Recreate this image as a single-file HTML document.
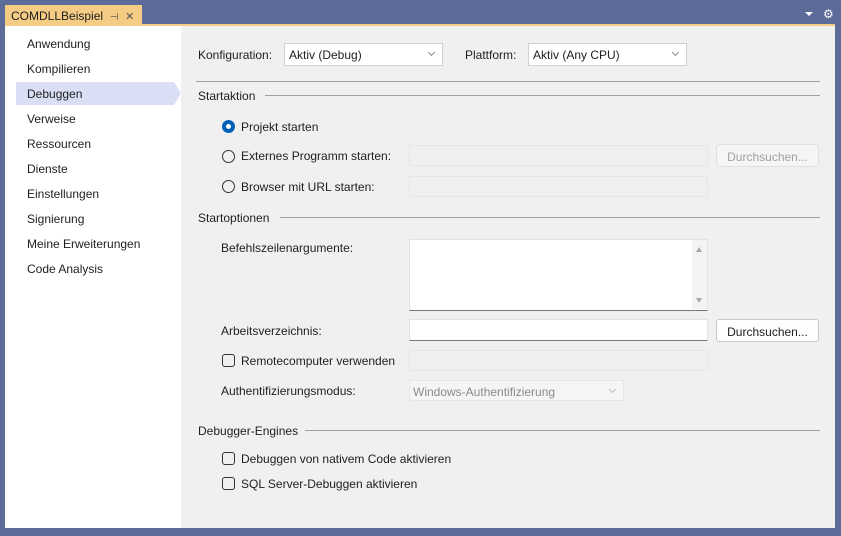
<!DOCTYPE html>
<html><head><meta charset="utf-8"><style>
*{box-sizing:border-box;margin:0;padding:0}
body{width:841px;height:536px;background:#5d6b99;position:relative;overflow:hidden;font-family:"Liberation Sans",sans-serif;font-size:12px;color:#1e1e1e}
.a{position:absolute;white-space:nowrap}
.tab{left:5px;top:5px;width:137px;height:20px;background:#f5cc84;padding:4px 0 0 6px;font-size:12px}
.bar{left:5px;top:24px;width:830px;height:2px;background:#f5cc84}
.left{left:5px;top:26px;width:176px;height:502px;background:#fff}
.right{left:181px;top:26px;width:654px;height:502px;background:#f0f0f0}
.nav{left:27px}
.sel{left:16px;top:82px;width:158px;height:23px;background:#dadff5}
.box{background:#fff;border:1px solid #d0d0d0}
.dis{background:#f0f0f0;border:1px solid #e6e6e6}
.line{height:1px;background:#a0a0a0}
.rad{width:13px;height:13px;border:1px solid #333;border-radius:50%}
.chk{width:13px;height:13px;border:1px solid #333;border-radius:3px}
.btn{border:1px solid #c8c8c8;border-radius:3px;background:#fdfdfd;text-align:center;padding-top:5px}
.chev{position:absolute;right:8px;top:6px;width:5px;height:5px;border-right:1px solid #888;border-bottom:1px solid #888;transform:rotate(45deg)}
</style></head><body>
<div class="a tab">COMDLLBeispiel&nbsp;&nbsp;<span style="font-size:10px;color:#555">⊣</span>&nbsp;&nbsp;<span style="color:#555;font-size:11px">✕</span></div>
<div class="a" style="left:805px;top:12px;width:0;height:0;border-left:4px solid transparent;border-right:4px solid transparent;border-top:4px solid #fff"></div>
<div class="a" style="left:823px;top:7px;color:#fff;font-size:12px">⚙</div>
<div class="a bar"></div>
<div class="a left"></div>
<div class="a right"></div>
<div class="a sel"></div>
<div class="a" style="left:174px;top:82px;width:0;height:0;border-top:11px solid transparent;border-bottom:12px solid transparent;border-left:7px solid #dadff5"></div>
<div class="a nav" style="top:37px">Anwendung</div>
<div class="a nav" style="top:62px">Kompilieren</div>
<div class="a nav" style="top:87px">Debuggen</div>
<div class="a nav" style="top:112px">Verweise</div>
<div class="a nav" style="top:137px">Ressourcen</div>
<div class="a nav" style="top:162px">Dienste</div>
<div class="a nav" style="top:187px">Einstellungen</div>
<div class="a nav" style="top:212px">Signierung</div>
<div class="a nav" style="top:237px">Meine Erweiterungen</div>
<div class="a nav" style="top:262px">Code Analysis</div>

<div class="a" style="left:198px;top:48px">Konfiguration:</div>
<div class="a box" style="left:284px;top:43px;width:159px;height:23px;padding:4px 0 0 4px">Aktiv (Debug)<div class="chev"></div></div>
<div class="a" style="left:465px;top:48px">Plattform:</div>
<div class="a box" style="left:528px;top:43px;width:159px;height:23px;padding:4px 0 0 4px">Aktiv (Any CPU)<div class="chev"></div></div>
<div class="a line" style="left:196px;top:81px;width:624px"></div>

<div class="a" style="left:198px;top:89px">Startaktion</div>
<div class="a line" style="left:265px;top:95px;width:555px"></div>
<div class="a rad" style="left:222px;top:120px;border:4px solid #005fb8;background:#fff"></div>
<div class="a" style="left:241px;top:120px">Projekt starten</div>
<div class="a rad" style="left:222px;top:150px"></div>
<div class="a" style="left:241px;top:149px">Externes Programm starten:</div>
<div class="a dis" style="left:409px;top:145px;width:299px;height:21px"></div>
<div class="a btn" style="left:716px;top:144px;width:103px;height:23px;color:#a0a0a0;border-color:#e0e0e0;background:#f5f5f5">Durchsuchen...</div>
<div class="a rad" style="left:222px;top:180px"></div>
<div class="a" style="left:241px;top:180px">Browser mit URL starten:</div>
<div class="a dis" style="left:409px;top:176px;width:299px;height:21px"></div>

<div class="a" style="left:198px;top:211px">Startoptionen</div>
<div class="a line" style="left:280px;top:217px;width:540px"></div>
<div class="a" style="left:221px;top:241px">Befehlszeilenargumente:</div>
<div class="a box" style="left:409px;top:239px;width:299px;height:72px;border-color:#e3e3e3;border-bottom:1px solid #777"></div>
<div class="a" style="left:692px;top:240px;width:15px;height:69px;background:#f3f3f3"></div>
<div class="a" style="left:696px;top:247px;border-left:3px solid transparent;border-right:3px solid transparent;border-bottom:5px solid #a8a8a8"></div>
<div class="a" style="left:696px;top:298px;border-left:3px solid transparent;border-right:3px solid transparent;border-top:5px solid #a8a8a8"></div>
<div class="a" style="left:221px;top:324px">Arbeitsverzeichnis:</div>
<div class="a box" style="left:409px;top:319px;width:299px;height:22px;border-color:#e3e3e3;border-bottom:1px solid #777"></div>
<div class="a btn" style="left:716px;top:319px;width:103px;height:23px">Durchsuchen...</div>
<div class="a chk" style="left:222px;top:354px"></div>
<div class="a" style="left:241px;top:354px">Remotecomputer verwenden</div>
<div class="a dis" style="left:409px;top:350px;width:299px;height:21px"></div>
<div class="a" style="left:221px;top:384px">Authentifizierungsmodus:</div>
<div class="a dis" style="left:409px;top:380px;width:215px;height:21px;padding:4px 0 0 3px;color:#8a8a8a;background:#f5f5f5">Windows-Authentifizierung<div class="chev" style="border-color:#bbb"></div></div>

<div class="a" style="left:198px;top:424px">Debugger-Engines</div>
<div class="a line" style="left:305px;top:430px;width:515px"></div>
<div class="a chk" style="left:222px;top:452px"></div>
<div class="a" style="left:241px;top:452px">Debuggen von nativem Code aktivieren</div>
<div class="a chk" style="left:222px;top:477px"></div>
<div class="a" style="left:241px;top:477px">SQL Server-Debuggen aktivieren</div>
</body></html>
